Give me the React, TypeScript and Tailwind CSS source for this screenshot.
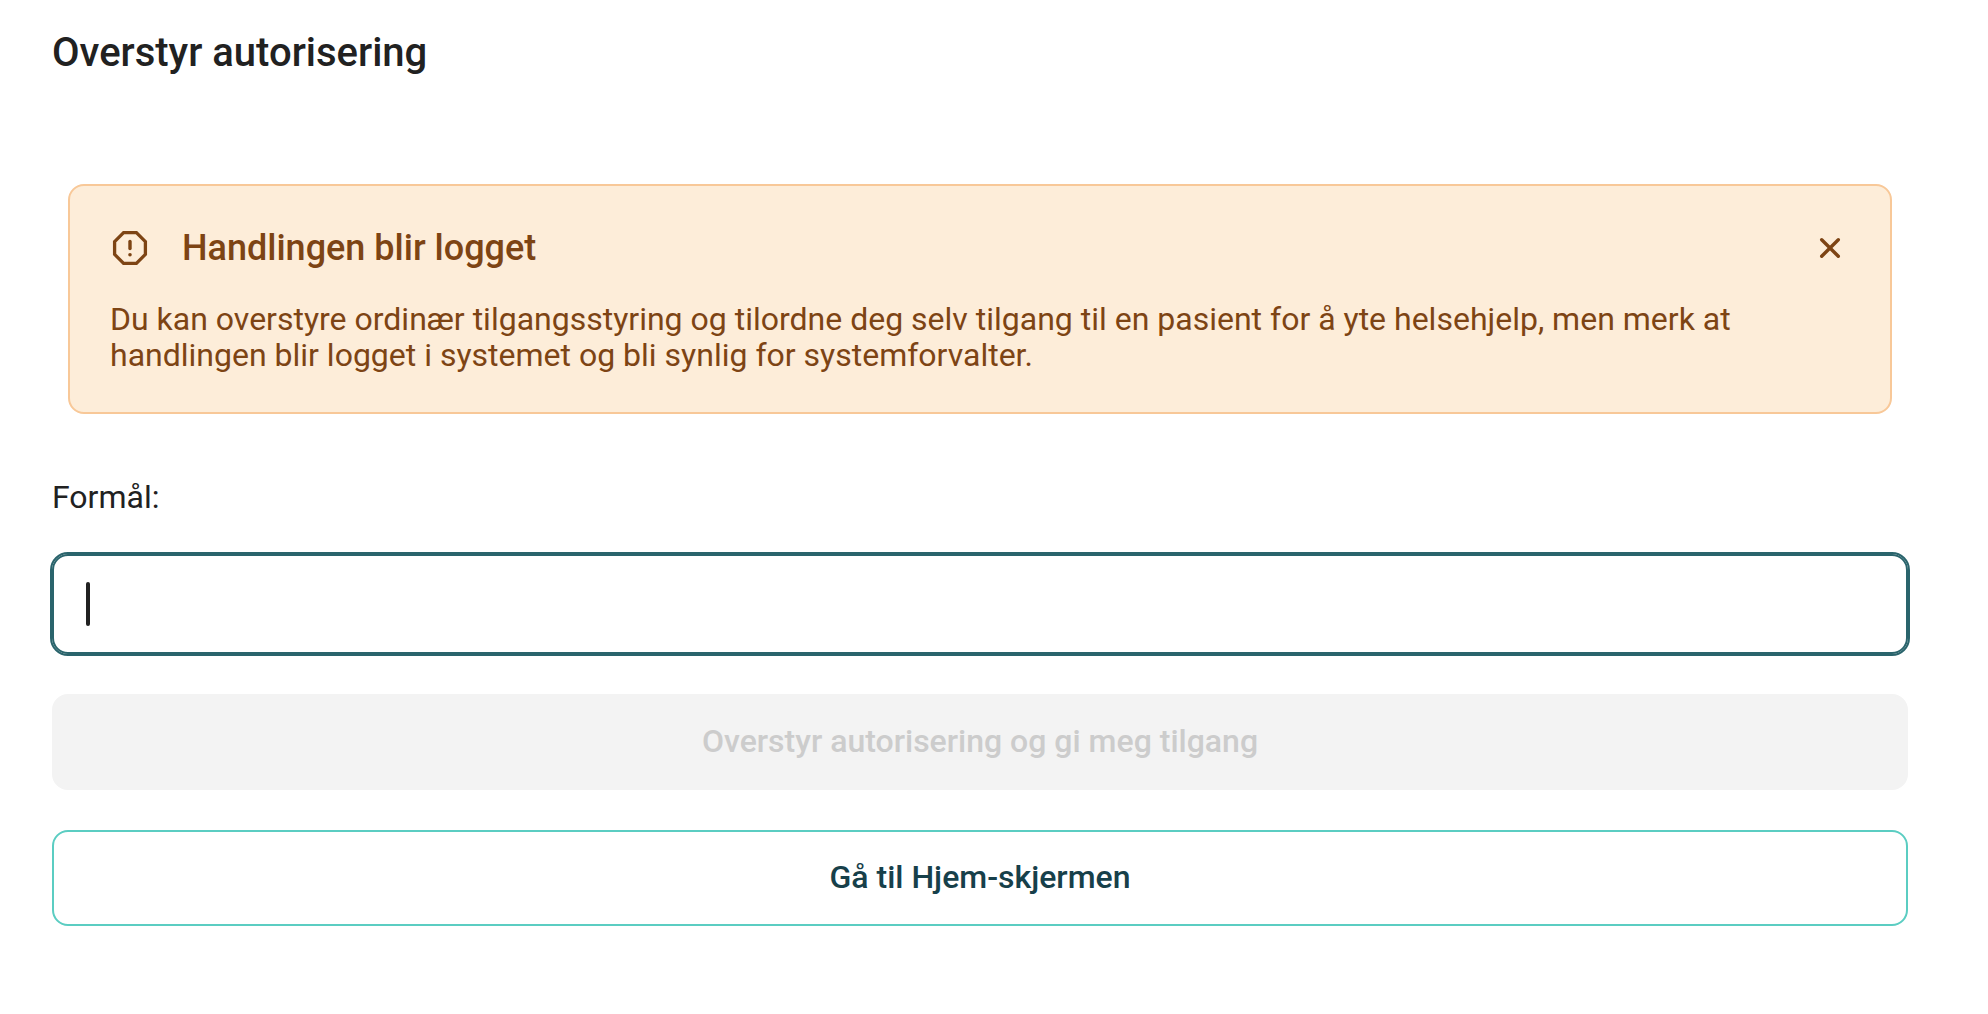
import { useState, type FC } from "react";

const WarningIcon: FC = () => (
  <svg
    className="size-10 shrink-0"
    viewBox="0 0 40 40"
    fill="none"
    stroke="currentColor"
    strokeWidth="3.3"
    strokeLinecap="round"
    aria-hidden="true"
  >
    <path d="M13.6 4.6h12.8l9 9v12.8l-9 9H13.6l-9-9V13.6z" />
    <path d="M20 13.5v7" strokeWidth="3.4" />
    <circle cx="20" cy="26.7" r="1.8" fill="currentColor" stroke="none" />
  </svg>
);

const CloseIcon: FC = () => (
  <svg
    className="size-10"
    viewBox="0 0 40 40"
    fill="none"
    stroke="currentColor"
    strokeWidth="3.4"
    strokeLinecap="round"
    aria-hidden="true"
  >
    <path d="M11.7 11.7l16.6 16.6M28.3 11.7l-16.6 16.6" />
  </svg>
);

const LogWarning: FC<{ onClose: () => void }> = ({ onClose }) => (
  <section
    role="alert"
    className="mx-4 rounded-2xl border-2 border-[#f8c898] bg-[#fdedd9] px-10 pt-10 pb-[39px] text-[#7d4414]"
  >
    <div className="flex items-center">
      <WarningIcon />
      <h2 className="ml-8 flex-1 text-[36px] leading-[44px] font-medium">
        Handlingen blir logget
      </h2>
      <button type="button" aria-label="Lukk" onClick={onClose}>
        <CloseIcon />
      </button>
    </div>
    <p className="mt-[31px] text-[32px] leading-[36px]">
      Du kan overstyre ordinær tilgangsstyring og tilordne deg selv tilgang til
      en pasient for å yte helsehjelp, men merk at handlingen blir logget i
      systemet og bli synlig for systemforvalter.
    </p>
  </section>
);

export default function App() {
  const [showWarning, setShowWarning] = useState(true);
  const [purpose, setPurpose] = useState("");

  return (
    <main className="bg-white pt-7 pr-20 pb-20 pl-[52px] font-['Roboto',sans-serif] text-[#212121]">
      <h1 className="mb-[106px] text-[40px] leading-[50px] font-medium">
        Overstyr autorisering
      </h1>
      {showWarning && <LogWarning onClose={() => setShowWarning(false)} />}
      <form
        className="mt-16 flex flex-col"
        onSubmit={(e) => e.preventDefault()}
      >
        <label htmlFor="purpose" className="text-[32px] leading-[38px]">
          Formål:
        </label>
        <div className="relative mt-[38px]">
          <input
            id="purpose"
            type="text"
            value={purpose}
            onChange={(e) => setPurpose(e.target.value)}
            className="block h-[100px] w-full rounded-2xl border-2 border-[#2a646c] px-8 text-[32px] caret-transparent outline-2 outline-[#2a646c]"
          />
          {purpose === "" && (
            <span className="pointer-events-none absolute top-7 left-[34px] h-11 w-1 rounded-full bg-[#212121]" />
          )}
        </div>
        <button
          type="submit"
          disabled={purpose === ""}
          className="mt-10 h-24 rounded-2xl border-2 border-[#f3f3f3] bg-[#f3f3f3] pb-[2px] text-[32px] leading-[38px] font-medium text-[#cccccc]"
        >
          Overstyr autorisering og gi meg tilgang
        </button>
        <button
          type="button"
          className="mt-10 h-24 rounded-2xl border-2 border-[#5bcdc2] pb-[2px] text-[32px] leading-[38px] font-medium text-[#17404a]"
        >
          Gå til Hjem-skjermen
        </button>
      </form>
    </main>
  );
}
